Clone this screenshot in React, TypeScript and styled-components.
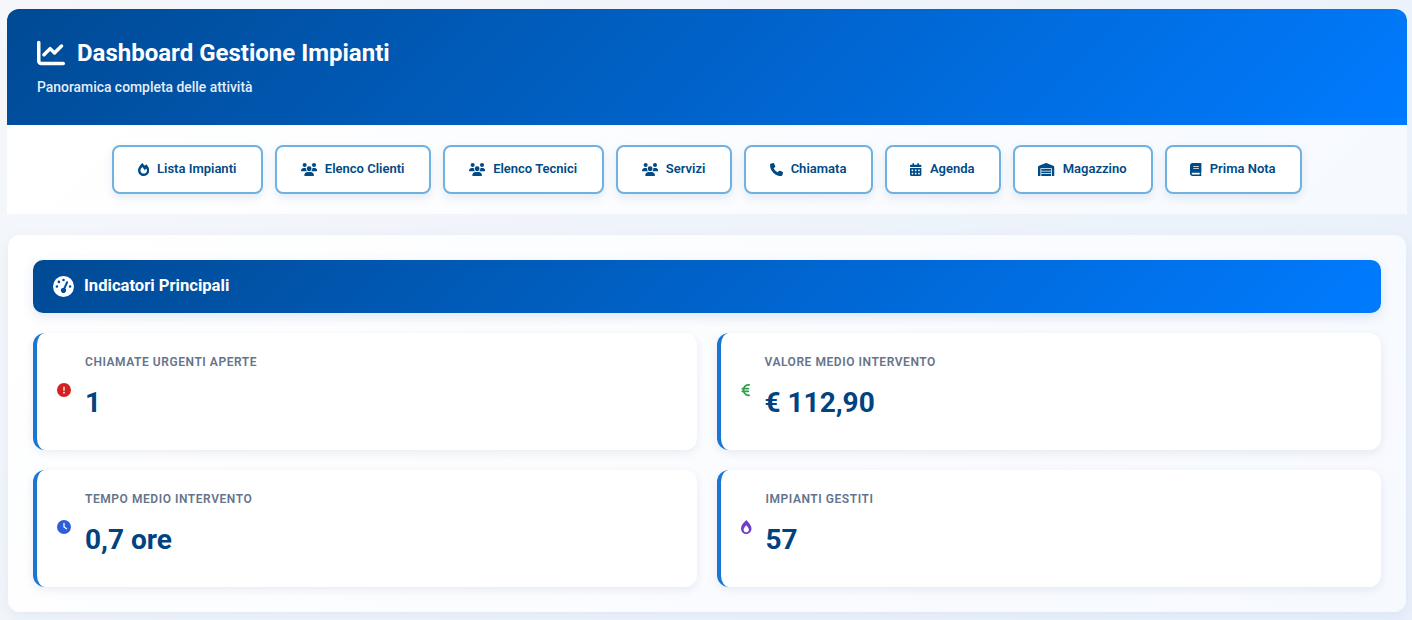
import React from 'react';
import styled, { createGlobalStyle } from 'styled-components';
import { FaBook, FaBurn, FaFireAlt } from 'react-icons/fa';
import {
  FaCalendarDays,
  FaChartLine,
  FaCircleExclamation,
  FaClock,
  FaEuroSign,
  FaGaugeHigh,
  FaPhone,
  FaUsers,
  FaWarehouse,
} from 'react-icons/fa6';

const GlobalStyle = createGlobalStyle`
  html, body {
    margin: 0;
    padding: 0;
    height: 620px;
    overflow: hidden;
  }
  body {
    background: linear-gradient(135deg, #f5f7fa 0%, #e8f0fb 100%);
    font-family: Roboto, "Liberation Sans", sans-serif;
  }
  * {
    box-sizing: border-box;
  }
`;

const Page = styled.div`
  width: 1400px;
  margin: 0 0 0 7px;
  padding-top: 9px;
`;

const Hero = styled.header`
  height: 116px;
  padding: 26px 30px 0;
  color: #fff;
  background: linear-gradient(135deg, #004a94 0%, #007bff 100%);
  border-radius: 12px 12px 0 0;
`;

const HeroTitle = styled.h1`
  display: flex;
  align-items: center;
  gap: 12px;
  margin: 0;
  font-size: 24px;
  line-height: 36px;
  font-weight: 700;

  svg {
    width: 28px;
    height: 28px;
  }
`;

const HeroSubtitle = styled.p`
  margin: 6px 0 0;
  font-size: 13.9px;
  line-height: 20px;
  font-weight: 500;
  opacity: 0.9;
`;

const Nav = styled.nav`
  display: flex;
  justify-content: center;
  gap: 12px;
  height: 89px;
  padding-top: 20px;
  background: linear-gradient(135deg, #ffffff 0%, #f6f9fe 100%);
`;

const NavButton = styled.a<{ $width: number; $iconWidth: number }>`
  display: flex;
  align-items: center;
  justify-content: center;
  gap: 8px;
  height: 49px;
  width: ${props => props.$width}px;
  padding-right: 1px;
  color: #004a85;
  background: #fff;
  border: 2px solid #6fb1e1;
  border-radius: 8px;
  box-shadow: 0 4px 10px rgba(0, 74, 148, 0.1);
  font-size: 13px;
  font-weight: 600;

  svg {
    height: 13px;
    width: ${props => props.$iconWidth}px;
  }
`;

const NavLabel = styled.span`
  padding-bottom: 2px;
`;

const Panel = styled.main`
  margin: 21px 1px 0;
  height: 377px;
  padding: 25px;
  background: linear-gradient(135deg, #ffffff 0%, #f6f9fe 100%);
  border-radius: 12px;
  box-shadow: 0 4px 14px rgba(0, 60, 130, 0.06);
`;

const PanelHeader = styled.h2`
  display: flex;
  align-items: center;
  gap: 10px;
  height: 53px;
  margin: 0;
  padding: 0 20px;
  color: #fff;
  background: linear-gradient(135deg, #004a94 0%, #007bff 100%);
  border-radius: 10px;
  box-shadow: 0 4px 12px rgba(0, 74, 148, 0.12);
  font-size: 16.6px;
  font-weight: 700;

  svg {
    width: 21px;
    height: 21px;
  }
`;

const PanelTitle = styled.span`
  padding-bottom: 2px;
`;

const CardGrid = styled.section`
  display: grid;
  grid-template-columns: 1fr 1fr;
  gap: 20px;
  margin-top: 20px;
`;

const Card = styled.article`
  display: flex;
  align-items: center;
  gap: 14px;
  height: 117px;
  padding: 0 20px;
  background: #fff;
  border-left: 4px solid #1976d2;
  border-radius: 12px;
  box-shadow: 0 3px 10px rgba(0, 40, 90, 0.08);
`;

const CardIcon = styled.span<{ $color: string; $width: number }>`
  display: flex;
  flex: none;
  margin-bottom: 3px;
  color: ${props => props.$color};

  svg {
    height: 14px;
    width: ${props => props.$width}px;
  }
`;

const CardBody = styled.div`
  padding-bottom: 7px;
`;

const CardLabel = styled.div`
  color: #64748b;
  font-size: 12px;
  line-height: 18px;
  font-weight: 600;
  letter-spacing: 0.55px;
  text-transform: uppercase;
`;

const CardValue = styled.div`
  margin-top: 11px;
  color: #00437f;
  font-size: 28px;
  line-height: 42px;
  font-weight: 700;
`;

// icon widths follow each glyph's viewBox at a 13px height
const navItems = [
  { label: 'Lista Impianti', icon: FaFireAlt, width: 151, iconWidth: 11.4 },
  { label: 'Elenco Clienti', icon: FaUsers, width: 156, iconWidth: 16.25 },
  { label: 'Elenco Tecnici', icon: FaUsers, width: 161, iconWidth: 16.25 },
  { label: 'Servizi', icon: FaUsers, width: 116, iconWidth: 16.25 },
  { label: 'Chiamata', icon: FaPhone, width: 129, iconWidth: 13 },
  { label: 'Agenda', icon: FaCalendarDays, width: 116, iconWidth: 11.4 },
  { label: 'Magazzino', icon: FaWarehouse, width: 140, iconWidth: 16.25 },
  { label: 'Prima Nota', icon: FaBook, width: 137, iconWidth: 11.4 },
];

const metrics = [
  { label: 'Chiamate urgenti aperte', value: '1', icon: FaCircleExclamation, color: '#d32020', iconWidth: 14 },
  { label: 'Valore medio intervento', value: '€ 112,90', icon: FaEuroSign, color: '#2e9e4f', iconWidth: 9.5 },
  { label: 'Tempo medio intervento', value: '0,7 ore', icon: FaClock, color: '#2f5fd8', iconWidth: 14 },
  { label: 'Impianti gestiti', value: '57', icon: FaBurn, color: '#6f3fc9', iconWidth: 10.5 },
];

export default function App() {
  return (
    <>
      <GlobalStyle />
      <Page>
        <Hero>
          <HeroTitle>
            <FaChartLine />
            Dashboard Gestione Impianti
          </HeroTitle>
          <HeroSubtitle>Panoramica completa delle attività</HeroSubtitle>
        </Hero>
        <Nav>
          {navItems.map(item => (
            <NavButton key={item.label} $width={item.width} $iconWidth={item.iconWidth}>
              <item.icon />
              <NavLabel>{item.label}</NavLabel>
            </NavButton>
          ))}
        </Nav>
        <Panel>
          <PanelHeader>
            <FaGaugeHigh />
            <PanelTitle>Indicatori Principali</PanelTitle>
          </PanelHeader>
          <CardGrid>
            {metrics.map(metric => (
              <Card key={metric.label}>
                <CardIcon $color={metric.color} $width={metric.iconWidth}>
                  <metric.icon />
                </CardIcon>
                <CardBody>
                  <CardLabel>{metric.label}</CardLabel>
                  <CardValue>{metric.value}</CardValue>
                </CardBody>
              </Card>
            ))}
          </CardGrid>
        </Panel>
      </Page>
    </>
  );
}
